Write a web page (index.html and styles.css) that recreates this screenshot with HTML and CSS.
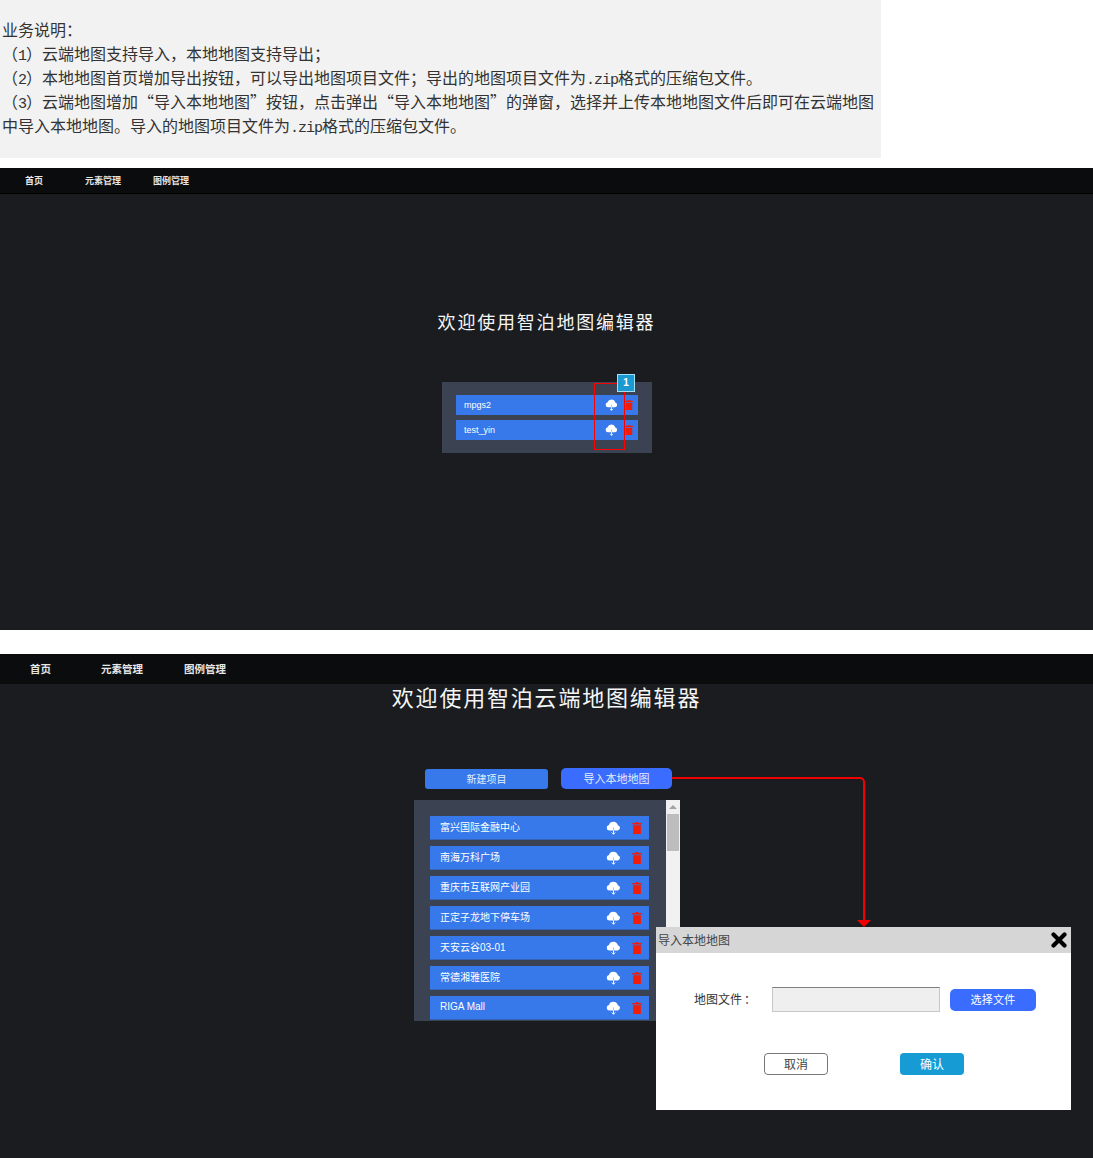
FILE: index.html
```html
<!DOCTYPE html>
<html lang="zh-CN">
<head>
  <meta charset="UTF-8">
  <title>业务说明</title>
  <link rel="stylesheet" href="styles.css">
</head>
<body>
  <svg class="defs" width="0" height="0">
    <symbol id="cloud" viewBox="0 0 24 22">
      <path fill="#fff" d="M5.500 15a4.500 4.500 0 0 1-.8-8.900 7.500 7.500 0 0 1 14.300.3 4.400 4.400 0 0 1-.2 8.600z"/>
      <path fill="none" stroke="#a9c4f5" stroke-width="1.600" d="M12 10v5"/>
      <path fill="none" stroke="#fff" stroke-width="1.500" d="M12 15v6M9.200 18.200l2.800 2.800 2.800-2.800"/>
    </symbol>
    <symbol id="trash" viewBox="0 0 14 18">
      <path fill="#f01d0a" d="M5 0h4v1.500h5v2.200H0V1.500h5zM1.200 5h11.600v13H1.200z"/>
    </symbol>
  </svg>

  <div class="notes">
    业务说明<span class="colon">：</span><br>
    （<span class="latin">1</span>）云端地图支持导入，本地地图支持导出；<br>
    （<span class="latin">2</span>）本地地图首页增加导出按钮，可以导出地图项目文件；导出的地图项目文件为<span class="latin">.zip</span>格式的压缩包文件。<br>
    （<span class="latin">3</span>）云端地图增加“导入本地地图”按钮，点击弹出“导入本地地图”的弹窗，选择并上传本地地图文件后即可在云端地图<br>
    中导入本地地图。导入的地图项目文件为<span class="latin">.zip</span>格式的压缩包文件。
  </div>

  <section class="screen screen-local">
    <nav class="nav">
      <span>首页</span>
      <span>元素管理</span>
      <span>图例管理</span>
    </nav>
    <h1 class="title">欢迎使用智泊地图编辑器</h1>
    <div class="panel">
      <div class="row">
        <span class="row-name">mpgs2</span>
        <svg class="icon-cloud"><use href="#cloud"/></svg>
        <svg class="icon-trash"><use href="#trash"/></svg>
      </div>
      <div class="row">
        <span class="row-name">test_yin</span>
        <svg class="icon-cloud"><use href="#cloud"/></svg>
        <svg class="icon-trash"><use href="#trash"/></svg>
      </div>
      <div class="mark"></div>
      <div class="badge">1</div>
    </div>
  </section>

  <section class="screen screen-cloud">
    <nav class="nav">
      <span>首页</span>
      <span>元素管理</span>
      <span>图例管理</span>
    </nav>
    <h1 class="title">欢迎使用智泊云端地图编辑器</h1>
    <div class="actions">
      <button class="btn-new">新建项目</button>
      <button class="btn-import">导入本地地图</button>
    </div>
    <div class="list-wrap">
      <div class="panel">
        <div class="row"><span class="row-name">富兴国际金融中心</span><svg class="icon-cloud"><use href="#cloud"/></svg><svg class="icon-trash"><use href="#trash"/></svg></div>
        <div class="row"><span class="row-name">南海万科广场</span><svg class="icon-cloud"><use href="#cloud"/></svg><svg class="icon-trash"><use href="#trash"/></svg></div>
        <div class="row"><span class="row-name">重庆市互联网产业园</span><svg class="icon-cloud"><use href="#cloud"/></svg><svg class="icon-trash"><use href="#trash"/></svg></div>
        <div class="row"><span class="row-name">正定子龙地下停车场</span><svg class="icon-cloud"><use href="#cloud"/></svg><svg class="icon-trash"><use href="#trash"/></svg></div>
        <div class="row"><span class="row-name">天安云谷03-01</span><svg class="icon-cloud"><use href="#cloud"/></svg><svg class="icon-trash"><use href="#trash"/></svg></div>
        <div class="row"><span class="row-name">常德湘雅医院</span><svg class="icon-cloud"><use href="#cloud"/></svg><svg class="icon-trash"><use href="#trash"/></svg></div>
        <div class="row"><span class="row-name">RIGA Mall</span><svg class="icon-cloud"><use href="#cloud"/></svg><svg class="icon-trash"><use href="#trash"/></svg></div>
      </div>
      <div class="scrollbar">
        <div class="scroll-up"></div>
        <div class="scroll-thumb"></div>
      </div>
    </div>

    <svg class="arrow" width="200" height="153" viewBox="0 0 200 153">
      <path fill="none" stroke="#f00000" stroke-width="2" d="M0 4H188a4 4 0 0 1 4 4V147"/>
      <path fill="#f00000" d="M185 146h14l-7 7z"/>
    </svg>

    <div class="dialog">
      <div class="dialog-head">
        <span>导入本地地图</span>
        <svg class="dialog-close" width="16" height="16" viewBox="0 0 16 16">
          <path stroke="#000" stroke-width="4.200" stroke-linecap="round" d="M2.500 2.500l11 11M13.500 2.500l-11 11"/>
        </svg>
      </div>
      <div class="file-row">
        <label>地图文件<span class="colon">：</span></label>
        <div class="file-input"></div>
        <button class="btn-file">选择文件</button>
      </div>
      <div class="dialog-foot">
        <button class="btn-cancel">取消</button>
        <button class="btn-ok">确认</button>
      </div>
    </div>
  </section>
</body>
</html>
```

FILE: styles.css
```css
body {
  margin: 0;
  background: #fff;
  font-family: "Liberation Sans", "Noto Sans CJK SC", sans-serif;
}

button {
  border: none;
  padding: 0 0 2px;
  font-family: inherit;
  cursor: pointer;
}

.defs {
  position: absolute;
}

.notes {
  width: 879px;
  height: 141px;
  padding: 17px 0 0 2px;
  background: #f2f2f2;
  color: #333;
  font-family: "Noto Sans CJK SC", sans-serif;
  font-size: 16px;
  line-height: 24px;
  white-space: nowrap;
}

.latin {
  font-family: "Liberation Mono", monospace;
  font-size: 15px;
  letter-spacing: -1px;
  line-height: 0;
}

.colon {
  font-family: "Noto Sans CJK TC", sans-serif;
  line-height: 0;
}

.screen {
  position: relative;
  display: flex;
  flex-direction: column;
  align-items: center;
  background: #1a1c20;
  color: #fff;
}

.nav {
  align-self: stretch;
  display: grid;
  align-items: center;
  background: #0b0c0d;
  color: #e6e6e6;
  font-weight: bold;
}

.title {
  margin: 0;
  font-weight: normal;
  letter-spacing: 1.8px;
  color: #f5f5f5;
}

.panel {
  position: relative;
  box-sizing: border-box;
  background: #3b4251;
}

.row {
  display: flex;
  align-items: center;
  box-sizing: border-box;
  background: #3778ea;
}

.row-name {
  flex: 1;
  padding-bottom: 2px;
  white-space: nowrap;
}

/* local map screen */
.screen-local {
  height: 462px;
  margin-top: 10px;
}

.screen-local .nav {
  box-sizing: border-box;
  height: 26px;
  grid-template-columns: 60px 68px auto;
  padding: 0 0 1px 25px;
  font-size: 9px;
  border-bottom: 1px solid #000;
}

.screen-local .title {
  margin-top: 116px;
  font-size: 18px;
  line-height: 26px;
}

.screen-local .panel {
  width: 210px;
  height: 71px;
  margin-top: 46px;
  margin-left: 1px;
  padding: 13px 14px;
}

.screen-local .row {
  height: 20px;
  margin-bottom: 5px;
  padding-left: 8px;
  font-size: 9px;
}

.screen-local .row-name {
  padding-bottom: 0;
}

.screen-local .icon-cloud {
  width: 13px;
  height: 12px;
  margin-right: 7px;
}

.screen-local .icon-trash {
  width: 8px;
  height: 10px;
  margin-right: 5px;
}

.mark {
  position: absolute;
  left: 152px;
  top: 1px;
  width: 31px;
  height: 67px;
  box-sizing: border-box;
  outline: 1px solid #ff0000;
  outline-offset: -1px;
}

.badge {
  position: absolute;
  left: 175px;
  top: -8px;
  width: 16px;
  height: 16px;
  border: 1px solid #a5dff5;
  background: #1b9ad2;
  font-size: 10px;
  font-weight: bold;
  line-height: 16px;
  text-align: center;
}

/* cloud map screen */
.screen-cloud {
  height: 504px;
  margin-top: 24px;
  overflow: hidden;
}

.screen-cloud .nav {
  box-sizing: border-box;
  height: 30px;
  grid-template-columns: 71px 83px auto;
  padding: 0 0 2px 30px;
  font-size: 10.5px;
}

.screen-cloud .title {
  font-size: 22px;
  line-height: 30px;
}

.actions {
  display: flex;
  gap: 13px;
  margin-top: 54px;
  margin-left: 4px;
  align-items: flex-end;
}

.actions button {
  color: #e8eefc;
  font-size: 10px;
}

.btn-new {
  width: 123px;
  height: 20px;
  border-radius: 3px;
  background: #3778ea;
}

.actions .btn-import {
  width: 111px;
  height: 21px;
  border-radius: 5px;
  background: #3a6cff;
  font-size: 11px;
}

.list-wrap {
  display: flex;
  margin-top: 11px;
  margin-left: 1px;
}

.screen-cloud .panel {
  width: 252px;
  height: 221px;
  padding: 16px;
  padding-right: 17px;
}

.screen-cloud .row {
  height: 24px;
  margin-bottom: 6px;
  padding-left: 10px;
  border-bottom: 1px solid #3565b8;
  font-size: 10px;
}

.screen-cloud .icon-cloud {
  width: 15px;
  height: 14px;
  margin-right: 11px;
}

.screen-cloud .icon-trash {
  width: 10px;
  height: 12px;
  margin-right: 7px;
}

.scrollbar {
  width: 14px;
  height: 221px;
  background: #f1f1f1;
}

.scroll-up {
  width: 0;
  margin: 5px auto 0;
  border-left: 4px solid transparent;
  border-right: 4px solid transparent;
  border-bottom: 4px solid #a3a3a3;
}

.scroll-thumb {
  width: 12px;
  height: 37px;
  margin: 5px 1px 0;
  background: #bdbdbd;
}

.arrow {
  position: absolute;
  left: 672px;
  top: 120px;
}

.dialog {
  position: absolute;
  left: 656px;
  top: 273px;
  width: 415px;
  height: 183px;
  background: #fff;
  color: #333;
}

.dialog-head {
  display: flex;
  align-items: center;
  justify-content: space-between;
  height: 26px;
  padding: 0 4px 0 2px;
  background: #d6d6d6;
  font-size: 12px;
  color: #444;
}

.dialog-head span {
  padding-bottom: 2px;
}

.file-row {
  display: flex;
  align-items: center;
  margin-top: 34px;
  padding-left: 38px;
  font-size: 12px;
}

.file-row label {
  width: 78px;
  padding-bottom: 2px;
}

.file-row .colon {
  margin-left: 2px;
}

.file-input {
  box-sizing: border-box;
  width: 168px;
  height: 25px;
  margin-right: 10px;
  background: #efefef;
  border: 1px solid #c8c8c8;
  border-top-color: #7f7f7f;
}

.btn-file {
  width: 86px;
  height: 22px;
  border-radius: 5px;
  background: #3a6cff;
  color: #fff;
  font-size: 11px;
  letter-spacing: 0.3px;
}

.dialog-foot {
  display: flex;
  gap: 72px;
  margin-top: 41px;
  padding-left: 108px;
}

.dialog-foot button {
  box-sizing: border-box;
  width: 64px;
  height: 22px;
  border-radius: 4px;
  font-size: 12px;
}

.btn-cancel {
  background: #fff;
  border: 1px solid #777;
  color: #444;
}

.btn-ok {
  background: #169bd5;
  color: #fff;
}
```
